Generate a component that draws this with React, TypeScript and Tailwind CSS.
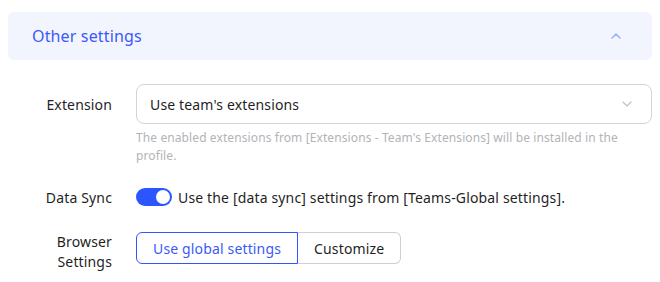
import { ChevronDown, ChevronUp } from 'lucide-react'

const font = { fontFamily: '"Microsoft YaHei", "Noto Sans", Arial, sans-serif' }

export default function App() {
	return (
		<div className="w-[660px] h-[282px] bg-white pt-3 text-[14px] tracking-[0.15px] text-[#1f1f1f]" style={font}>
			<div className="mx-2 h-12 rounded-md bg-[#f3f5fe] flex items-center justify-between pl-6 pr-7">
				<span className="text-[16px] text-[#3a5afa]">Other settings</span>
				<ChevronUp className="w-4 h-4 text-[#9fb0fb]" strokeWidth={2.5} />
			</div>

			<div className="pl-8 pr-2 pt-6">
				<div className="flex">
					<div className="w-20 shrink-0 h-10 flex items-center justify-end">Extension</div>
					<div className="ml-6 flex-1">
						<div className="h-10 rounded-lg border border-[#d4d4d8] flex items-center justify-between pl-[13px] pr-4">
							<span>Use team's extensions</span>
							<ChevronDown className="w-4 h-4 text-[#c4c4c8]" strokeWidth={2} />
						</div>
						<p className="mt-[5px] text-[12px] leading-[18px] tracking-[0.1px] text-[#b3b3b8] pr-6">
							The enabled extensions from [Extensions - Team's Extensions] will be installed in the
							profile.
						</p>
					</div>
				</div>

				<div className="flex mt-[20px] h-6 items-center">
					<div className="w-20 shrink-0 text-right">Data Sync</div>
					<div className="ml-6 flex items-center">
						<span className="w-9 h-[18px] rounded-full bg-[#2a55ff] flex items-center justify-end pr-[2px]">
							<span className="w-[14px] h-[14px] rounded-full bg-white" />
						</span>
						<span className="ml-[6px]">Use the [data sync] settings from [Teams-Global settings].</span>
					</div>
				</div>

				<div className="flex mt-[23px]">
					<div className="w-20 shrink-0 text-right leading-5">
						Browser
						<br />
						Settings
					</div>
					<div className="ml-6 flex h-8">
						<button className="px-4 rounded-l-md border border-[#2f55ff] text-[#3a5afa] bg-white">
							Use global settings
						</button>
						<button className="px-4 rounded-r-md border border-l-0 border-[#cfcfd4] bg-white">
							Customize
						</button>
					</div>
				</div>
			</div>
		</div>
	)
}
